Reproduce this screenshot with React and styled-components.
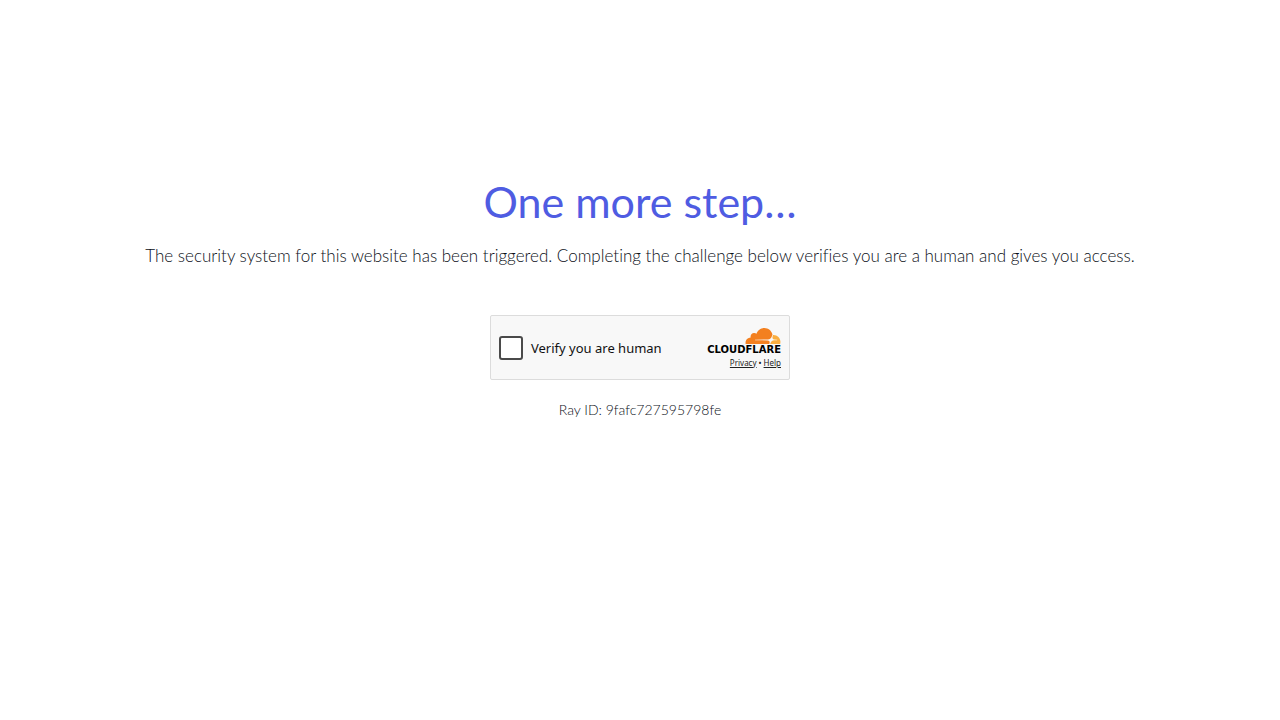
import React from "react";
import styled, { createGlobalStyle } from "styled-components";

const Global = createGlobalStyle`
  *, *::before, *::after { box-sizing: border-box; }
  body {
    margin: 0;
    background: #fff;
    color: #0c1018;
    font-family: Lato, "Liberation Sans", sans-serif;
    font-variant-ligatures: none;
  }
`;

const Page = styled.main`
  display: flex;
  flex-direction: column;
  align-items: center;
  padding: 176px 24px 48px;
  text-align: center;
`;

const Title = styled.h1`
  margin: 0;
  color: #4f5ce2;
  font-size: 43px;
  font-weight: 400;
  line-height: 52px;
`;

const Message = styled.p`
  margin: 16px 0 47px;
  font-size: 17px;
  font-weight: 300;
  line-height: 24px;
`;

const Widget = styled.section`
  display: flex;
  align-items: center;
  justify-content: space-between;
  width: 100%;
  max-width: 300px;
  height: 65px;
  padding: 0 8px;
  border: 1px solid #dcdcdc;
  border-radius: 2px;
  background: #f8f8f8;
  color: #111;
`;

const CheckLabel = styled.label`
  display: flex;
  align-items: center;
  gap: 8px;
  font-family: "Noto Sans", sans-serif;
  font-size: 13px;
  line-height: 20px;
`;

const Checkbox = styled.input`
  appearance: none;
  width: 24px;
  height: 24px;
  margin: 0;
  border: 2px solid #4a4a4a;
  border-radius: 3px;
  background: #fff;
  &:checked { background: #4353e0; }
`;

const Brand = styled.div`
  display: flex;
  flex-direction: column;
  align-items: flex-end;
`;

const Wordmark = styled.span`
  color: #000;
  font-family: "DejaVu Sans", sans-serif;
  font-size: 10px;
  font-weight: 700;
  line-height: 12px;
`;

const Links = styled.nav`
  display: flex;
  gap: 2px;
  margin-top: 2px;
  font-family: "Noto Sans", sans-serif;
  font-size: 8px;
  line-height: 10px;
  a { color: #222; text-decoration: underline; }
`;

const RayId = styled.p`
  margin: 20px 0 0;
  font-size: 14px;
  font-weight: 300;
  line-height: 20px;
`;

const Cloud = () => (
  <svg width="36" height="16" viewBox="0 6.5 24 11" aria-hidden="true">
    <path
      fill="#f38020"
      d="M16.5088 16.8447c.1475-.5068.0908-.9707-.1553-1.3154-.2246-.3164-.6045-.499-1.0615-.5205l-8.6592-.1123a.1559.1559 0 0 1-.1333-.0713c-.0283-.042-.0351-.0986-.021-.1553.0278-.084.1123-.1484.2036-.1562l8.7359-.1123c1.0351-.0489 2.1601-.8868 2.5537-1.9136l.499-1.3013c.0215-.0561.0293-.1128.0147-.168-.5625-2.5463-2.835-4.4453-5.5499-4.4453-2.5039 0-4.6284 1.6177-5.3876 3.8614-.4927-.3658-1.1187-.5625-1.794-.499-1.2026.119-2.1665 1.083-2.2861 2.2856-.0283.31-.0069.6128.0635.894C1.5683 13.171 0 14.7754 0 16.752c0 .1748.0142.3515.0352.5273.0141.083.0844.1475.1689.1475h15.9814c.0909 0 .1758-.0645.2032-.1553l.12-.4268z"
    />
    <path
      fill="#faae40"
      d="M19.2656 11.2813c-.0771 0-.1611 0-.2383.0112-.0566 0-.1054.0415-.127.0976l-.3378 1.1744c-.1475.5068-.0918.9707.1543 1.3164.2256.3164.6055.498 1.0625.5195l1.8437.1133c.0557 0 .1055.0263.1329.0703.0283.043.0351.1074.0214.1562-.0283.084-.1132.1485-.204.1553l-1.921.1123c-1.041.0488-2.1582.8867-2.5527 1.914l-.1406.3585c-.0283.0713.0215.1416.0986.1416h6.5977c.0771 0 .1474-.0489.169-.126.1122-.4082.1757-.837.1757-1.2803 0-2.6025-2.125-4.727-4.7344-4.727z"
    />
  </svg>
);

export default function App() {
  return (
    <>
      <Global />
      <Page>
        <Title>One more step…</Title>
        <Message>
          The security system for this website has been triggered. Completing the challenge below verifies you are a
          human and gives you access.
        </Message>
        <Widget>
          <CheckLabel htmlFor="verify">
            <Checkbox type="checkbox" id="verify" />
            Verify you are human
          </CheckLabel>
          <Brand>
            <Cloud />
            <Wordmark>CLOUDFLARE</Wordmark>
            <Links>
              <a href="#privacy">Privacy</a>
              <span>•</span>
              <a href="#help">Help</a>
            </Links>
          </Brand>
        </Widget>
        <RayId>Ray ID: 9fafc727595798fe</RayId>
      </Page>
    </>
  );
}
